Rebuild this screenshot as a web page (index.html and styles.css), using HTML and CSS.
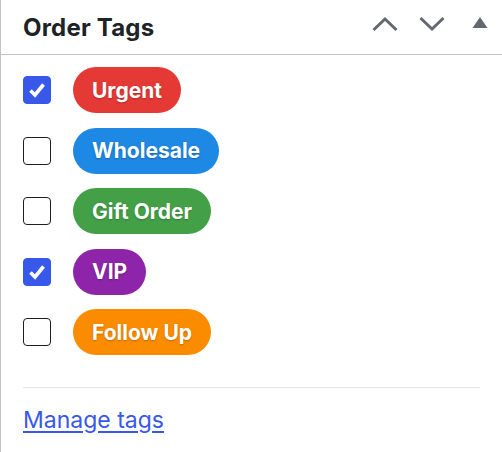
FILE: index.html
```html
<!DOCTYPE html>
<html>
<head>
<meta charset="utf-8">
<link rel="stylesheet" href="styles.css">
</head>
<body>
<div class="box">
  <div class="header">
    <h2 class="title">Order Tags</h2>
    <div class="actions">
      <svg class="icon" width="26" height="16" viewBox="0 0 26 16"><path d="M1.5 14 L13 3 L24.5 14" fill="none" stroke="#646970" stroke-width="3"/></svg>
      <svg class="icon" width="26" height="16" viewBox="0 0 26 16"><path d="M1.5 2 L13 13 L24.5 2" fill="none" stroke="#646970" stroke-width="3"/></svg>
      <svg class="icon tri" width="16" height="12" viewBox="0 0 16 12"><path d="M8 0 L15.5 11 L0.5 11 Z" fill="#646970"/></svg>
    </div>
  </div>
  <div class="body">
    <ul class="tags">
      <li class="row"><span class="cb checked"><svg width="20" height="20" viewBox="0 0 20 20"><path d="M3.5 10.5 L8 15 L16.5 4.5" fill="none" stroke="#fff" stroke-width="3.6"/></svg></span><span class="pill red">Urgent</span></li>
      <li class="row"><span class="cb"></span><span class="pill blue">Wholesale</span></li>
      <li class="row"><span class="cb"></span><span class="pill green">Gift Order</span></li>
      <li class="row"><span class="cb checked"><svg width="20" height="20" viewBox="0 0 20 20"><path d="M3.5 10.5 L8 15 L16.5 4.5" fill="none" stroke="#fff" stroke-width="3.6"/></svg></span><span class="pill purple">VIP</span></li>
      <li class="row"><span class="cb"></span><span class="pill orange">Follow Up</span></li>
    </ul>
    <div class="footer">
      <a class="manage" href="#">Manage tags</a>
    </div>
  </div>
</div>
</body>
</html>
```

FILE: styles.css
```css
html, body {
  margin: 0;
  padding: 0;
  background: #fff;
}
body {
  font-family: Inter, "Noto Sans", sans-serif;
  color: #1d2327;
}
.box {
  border-left: 1px solid #c3c4c7;
  height: 452px;
  box-sizing: border-box;
}
.header {
  height: 54px;
  border-bottom: 1px solid #c3c4c7;
  display: flex;
  align-items: center;
  justify-content: space-between;
  padding: 0 14px 0 22px;
}
.title {
  margin: 0;
  font-size: 24px;
  font-weight: 700;
  color: #1d2327;
  letter-spacing: 0.2px;
}
.actions {
  display: flex;
  align-items: center;
  gap: 21px;
  margin-top: -6px;
}
.tri {
  margin-left: 6px;
  margin-top: -2px;
}
.body {
  padding: 12px 22px 0 22px;
}
.tags {
  list-style: none;
  margin: 0;
  padding: 0;
  display: flex;
  flex-direction: column;
  gap: 14.5px;
}
.row {
  display: flex;
  align-items: center;
  gap: 22px;
  height: 46px;
}
.cb {
  width: 28px;
  height: 28px;
  box-sizing: border-box;
  border: 1.5px solid #1e1e1e;
  border-radius: 4px;
  display: flex;
  align-items: center;
  justify-content: center;
  background: #fff;
}
.cb.checked {
  background: #3858e9;
  border-color: #3858e9;
}
.pill {
  height: 46px;
  display: inline-flex;
  align-items: center;
  padding: 0 19px;
  border-radius: 23px;
  color: #fff;
  font-size: 21px;
  font-weight: 700;
  text-shadow: 0 1px 2px rgba(0,0,0,0.25);
}
.red { background: #e53935; }
.blue { background: #1e88e5; }
.green { background: #43a047; }
.purple { background: #8e24aa; }
.orange { background: #fb8c00; }
.footer {
  margin-top: 32px;
  border-top: 1px solid #e5e5e5;
  padding-top: 18px;
}
.manage {
  color: #3858e9;
  font-size: 23px;
  text-decoration: underline;
  text-underline-offset: 3px;
}
```
